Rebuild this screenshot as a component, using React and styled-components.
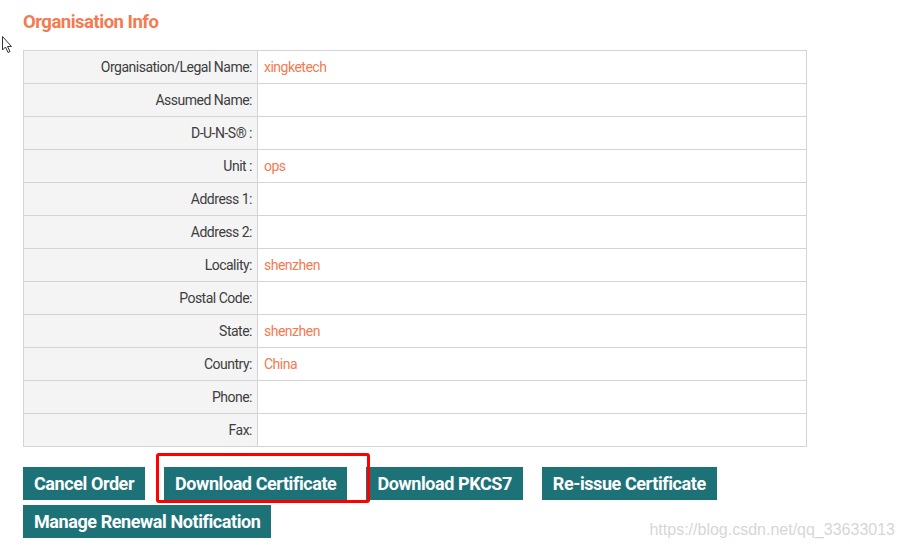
import React from "react";
import styled, { createGlobalStyle } from "styled-components";

const Global = createGlobalStyle`
  html, body { margin: 0; padding: 0; background: #fff; }
  body { font-family: Roboto, "Liberation Sans", sans-serif; width: 904px; height: 548px; overflow: hidden; position: relative; }
`;

const Page = styled.div`
  padding: 10px 0 0 23px;
  width: 881px;
  box-sizing: border-box;
`;

const Title = styled.h2`
  margin: 0 0 16px 0;
  font-size: 18.5px;
  font-weight: 700;
  letter-spacing: -0.5px;
  color: #f47a51;
  line-height: 24px;
`;

const InfoTable = styled.table`
  border-collapse: collapse;
  width: 784px;
  font-size: 14px;
  letter-spacing: -0.5px;
`;

const Label = styled.td`
  width: 228px;
  background: #f4f4f4;
  border: 1px solid #d4d4d4;
  text-align: right;
  padding: 0 5px 0 0;
  height: 32px;
  color: #3d3d3d;
`;

const Value = styled.td`
  border: 1px solid #d4d4d4;
  padding: 0 6px;
  height: 32px;
  color: #f47a51;
`;

const ButtonBar = styled.div`
  position: relative;
  display: flex;
  flex-wrap: wrap;
  column-gap: 19px;
  row-gap: 5px;
  margin-top: 20px;
`;

const Button = styled.button`
  background: #1d7278;
  color: #fff;
  border: none;
  height: 33px;
  padding: 0 11px;
  font-family: Roboto, "Liberation Sans", sans-serif;
  font-size: 18px;
  font-weight: 700;
  letter-spacing: -0.42px;
  cursor: pointer;
`;

const Highlight = styled.div`
  position: absolute;
  left: 133px;
  top: -14px;
  width: 208px;
  height: 44px;
  border: 3px solid #ff0000;
  border-radius: 3px;
  pointer-events: none;
`;

const Watermark = styled.div`
  position: absolute;
  right: 9px;
  bottom: 9px;
  font-family: "Liberation Sans", Arial, sans-serif;
  font-size: 16px;
  color: rgba(200, 200, 200, 0.75);
`;

const Cursor = styled.svg`
  position: absolute;
  left: 1px;
  top: 35px;
`;

const rows = [
  ["Organisation/Legal Name:", "xingketech"],
  ["Assumed Name:", ""],
  ["D-U-N-S® :", ""],
  ["Unit :", "ops"],
  ["Address 1:", ""],
  ["Address 2:", ""],
  ["Locality:", "shenzhen"],
  ["Postal Code:", ""],
  ["State:", "shenzhen"],
  ["Country:", "China"],
  ["Phone:", ""],
  ["Fax:", ""],
];

export default function App() {
  return (
    <>
      <Global />
      <Cursor width="14" height="20" viewBox="0 0 14 20">
        <path d="M1.5 1.5 L1.5 15 L4.5 12 L7 17.5 L9 16.5 L6.5 11.5 L10.5 11.5 Z" fill="#fff" stroke="#333" strokeWidth="1" strokeLinejoin="round" />
      </Cursor>
      <Page>
        <Title>Organisation Info</Title>
        <InfoTable>
          <tbody>
            {rows.map(([l, v]) => (
              <tr key={l}>
                <Label>{l}</Label>
                <Value>{v}</Value>
              </tr>
            ))}
          </tbody>
        </InfoTable>
        <ButtonBar>
          <Button>Cancel Order</Button>
          <Button>Download Certificate</Button>
          <Button>Download PKCS7</Button>
          <Button>Re-issue Certificate</Button>
          <Button>Manage Renewal Notification</Button>
          <Highlight />
        </ButtonBar>
      </Page>
      <Watermark>https://blog.csdn.net/qq_33633013</Watermark>
    </>
  );
}
